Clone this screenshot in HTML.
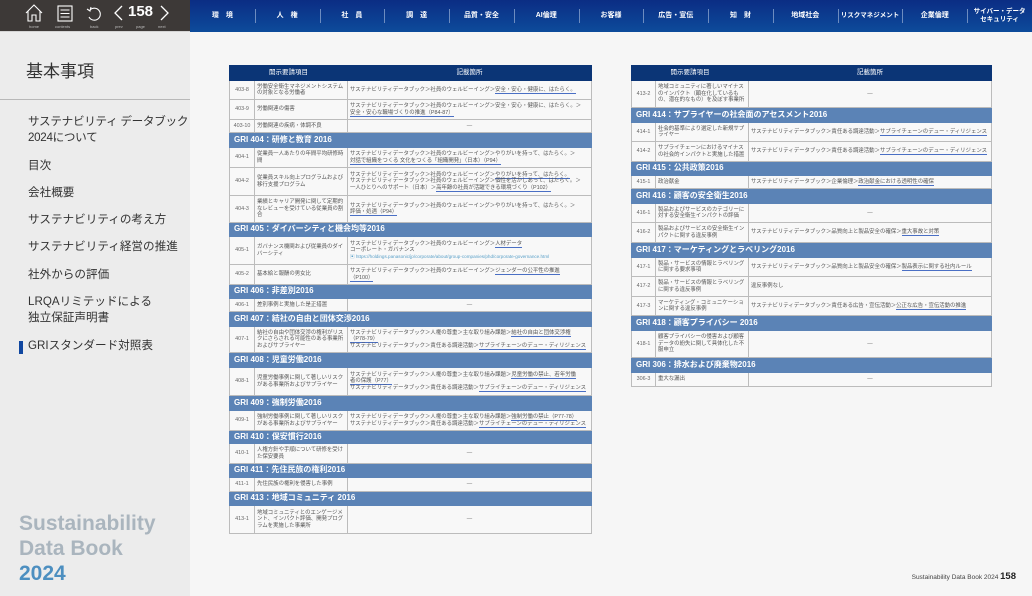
<!DOCTYPE html>
<html><head><meta charset="utf-8"><style>
*{margin:0;padding:0;box-sizing:border-box}
body{width:1032px;height:596px;overflow:hidden;background:#f6f6f6;font-family:"Liberation Sans","Noto Sans CJK JP",sans-serif;position:relative;color:#444}
#tl{position:absolute;left:0;top:0;width:190px;height:31px;background:#3d3937}
#side{position:absolute;left:0;top:31px;width:190px;height:565px;background:#ececec;border-top:1px solid #d4d4d4}
#nav{position:absolute;left:190px;top:0;width:842px;height:32px;background:linear-gradient(#0b2d84,#0d4b9b);display:flex}
#nav div{width:64.77px;height:32px;display:flex;align-items:center;justify-content:center;color:#fff;font-size:7px;font-weight:bold;text-align:center;line-height:8px;position:relative}
#nav div+div:before{content:"";position:absolute;left:0;top:9px;height:14px;border-left:1px solid #6d8cc0}
.lbl{position:absolute;top:24px;font-size:4px;color:#bbb}
.menu{position:absolute;left:28px;font-size:11.6px;color:#333;line-height:16px;white-space:nowrap}
table{position:absolute;border-collapse:collapse;table-layout:fixed;font-size:5.4px;line-height:6.4px;color:#555}
td,th{border:1px solid #bcbcbc;background:#f8f8f8;padding:0 2px;vertical-align:middle;overflow:hidden}
th{background:#0b3576;color:#fff;font-weight:normal;font-size:6.5px;text-align:center;border-color:#0b3576}
td.c{text-align:center;color:#666}
tr.g td{background:#5b83b6;color:#fff;font-weight:bold;font-size:8px;padding-left:4px;border-color:#5b83b6}
u{text-decoration:none;border-bottom:1px solid #4a6fc4}
.book{position:absolute;left:19px;font-size:21px;font-weight:bold;line-height:24px;color:#aab5be}
</style></head><body>
<div id="tl">
<svg width="190" height="31" style="position:absolute;left:0;top:0" fill="none" stroke="#fff" stroke-width="1.1">
<path d="M26 13 L34 5 L42 13 M28 11 V21 H32 V15 H36 V21 H40 V11"/>
<rect x="58" y="6" width="14" height="15"/><path d="M60.5 10 H69.5 M60.5 13.5 H69.5 M60.5 17 H69.5"/>
<path d="M90 10 A6 6 0 1 1 89 17 M87 9 L90 11 L91 7"/>
<path d="M122 6 L115 13 L122 20" stroke-width="1.3"/><path d="M161 6 L168 13 L161 20" stroke-width="1.3"/>
</svg>
<div style="position:absolute;left:128px;top:3px;color:#fff;font-size:15px;font-weight:bold">158</div>
<span class="lbl" style="left:29px">home</span><span class="lbl" style="left:55px">contents</span><span class="lbl" style="left:90px">back</span><span class="lbl" style="left:115px">prev</span><span class="lbl" style="left:136px">page</span><span class="lbl" style="left:158px">next</span>
</div>
<div id="nav"><div>環　境</div><div>人　権</div><div>社　員</div><div>調　達</div><div>品質・安全</div><div>AI倫理</div><div>お客様</div><div>広告・宣伝</div><div>知　財</div><div>地域社会</div><div style="font-size:6.5px">リスクマネジメント</div><div>企業倫理</div><div style="font-size:6.5px">サイバー・データ<br>セキュリティ</div></div>
<div id="side">
<div style="position:absolute;left:26px;top:25px;font-size:17px;color:#333">基本事項</div>
<div style="position:absolute;left:0;top:67px;width:190px;border-top:1px solid #b8b8b8"></div>
<div class="menu" style="top:82px;letter-spacing:-0.3px">サステナビリティ データブック<br>2024について</div>
<div class="menu" style="top:126px">目次</div>
<div class="menu" style="top:153px">会社概要</div>
<div class="menu" style="top:180px">サステナビリティの考え方</div>
<div class="menu" style="top:207px">サステナビリティ経営の推進</div>
<div class="menu" style="top:235px">社外からの評価</div>
<div class="menu" style="top:262px">LRQAリミテッドによる<br>独立保証声明書</div>
<div class="menu" style="top:306px">GRIスタンダード対照表</div>
<div style="position:absolute;left:19px;top:309px;width:4px;height:13px;background:#1047a0"></div>
<div class="book" style="top:480px">Sustainability</div>
<div class="book" style="top:505px">Data Book</div>
<div class="book" style="top:530px;color:#4d8fc0">2024</div>
</div>

<table style="left:229px;top:65px;width:363px">
<colgroup><col style="width:25px"><col style="width:93px"><col></colgroup>
<tr style="height:15px"><th colspan="2">開示要請項目</th><th>記載箇所</th></tr>
<tr style="height:19px"><td class="c">403-8</td><td>労働安全衛生マネジメントシステムの対象となる労働者</td><td>サステナビリティデータブック＞社員のウェルビーイング＞<u>安全・安心・健康に、はたらく。</u></td></tr>
<tr style="height:20px"><td class="c">403-9</td><td>労働関連の傷害</td><td>サステナビリティデータブック＞社員のウェルビーイング＞安全・安心・健康に、はたらく。＞<br><u>安全・安心な職場づくりの推進（P84-87）</u></td></tr>
<tr style="height:13px"><td class="c">403-10</td><td>労働関連の疾病・体調不良</td><td class="c">—</td></tr>
<tr class="g" style="height:15px"><td colspan="3">GRI 404：研修と教育 2016</td></tr>
<tr style="height:20px"><td class="c">404-1</td><td>従業員一人あたりの年間平均研修時間</td><td>サステナビリティデータブック＞社員のウェルビーイング＞やりがいを持って、はたらく。＞<br><u>対話で組織をつくる 文化をつくる「組織開発」（日本）（P94）</u></td></tr>
<tr style="height:28px"><td class="c">404-2</td><td>従業員スキル向上プログラムおよび移行支援プログラム</td><td>サステナビリティデータブック＞社員のウェルビーイング＞<u>やりがいを持って、はたらく。</u><br>サステナビリティデータブック＞社員のウェルビーイング＞個性を活かしあって、はたらく。＞<br>一人ひとりへのサポート（日本）＞<u>高年齢の社員が活躍できる環境づくり（P102）</u></td></tr>
<tr style="height:27px"><td class="c">404-3</td><td>業績とキャリア開発に関して定期的なレビューを受けている従業員の割合</td><td>サステナビリティデータブック＞社員のウェルビーイング＞やりがいを持って、はたらく。＞<br><u>評価・処遇（P94）</u></td></tr>
<tr class="g" style="height:14px"><td colspan="3">GRI 405：ダイバーシティと機会均等2016</td></tr>
<tr style="height:28px"><td class="c">405-1</td><td>ガバナンス機関および従業員のダイバーシティ</td><td>サステナビリティデータブック＞社員のウェルビーイング＞<u>人材データ</u><br>コーポレート・ガバナンス<br><span style="color:#5aa0c8;font-size:4.6px">▣ https://holdings.panasonic/jp/corporate/about/group-companies/phd/corporate-governance.html</span></td></tr>
<tr style="height:20px"><td class="c">405-2</td><td>基本給と報酬の男女比</td><td>サステナビリティデータブック＞社員のウェルビーイング＞<u>ジェンダーの公平性の推進</u><br><u>（P100）</u></td></tr>
<tr class="g" style="height:14px"><td colspan="3">GRI 406：非差別2016</td></tr>
<tr style="height:13px"><td class="c">406-1</td><td>差別事例と実施した是正措置</td><td class="c">—</td></tr>
<tr class="g" style="height:15px"><td colspan="3">GRI 407：結社の自由と団体交渉2016</td></tr>
<tr style="height:26px"><td class="c">407-1</td><td>結社の自由や団体交渉の権利がリスクにさらされる可能性のある事業所およびサプライヤー</td><td>サステナビリティデータブック＞人権の尊重＞主な取り組み課題＞<u>結社の自由と団体交渉権</u><br><u>（P78-79）</u><br>サステナビリティデータブック＞責任ある調達活動＞<u>サプライチェーンのデュー・ディリジェンス</u></td></tr>
<tr class="g" style="height:15px"><td colspan="3">GRI 408：児童労働2016</td></tr>
<tr style="height:28px"><td class="c">408-1</td><td>児童労働事例に関して著しいリスクがある事業所およびサプライヤー</td><td>サステナビリティデータブック＞人権の尊重＞主な取り組み課題＞<u>児童労働の禁止、若年労働</u><br><u>者の保護（P77）</u><br>サステナビリティデータブック＞責任ある調達活動＞<u>サプライチェーンのデュー・ディリジェンス</u></td></tr>
<tr class="g" style="height:15px"><td colspan="3">GRI 409：強制労働2016</td></tr>
<tr style="height:20px"><td class="c">409-1</td><td>強制労働事例に関して著しいリスクがある事業所およびサプライヤー</td><td>サステナビリティデータブック＞人権の尊重＞主な取り組み課題＞<u>強制労働の禁止（P77-78）</u><br>サステナビリティデータブック＞責任ある調達活動＞<u>サプライチェーンのデュー・ディリジェンス</u></td></tr>
<tr class="g" style="height:13px"><td colspan="3">GRI 410：保安慣行2016</td></tr>
<tr style="height:20px"><td class="c">410-1</td><td>人権方針や手順について研修を受けた保安要員</td><td class="c">—</td></tr>
<tr class="g" style="height:14px"><td colspan="3">GRI 411：先住民族の権利2016</td></tr>
<tr style="height:14px"><td class="c">411-1</td><td>先住民族の権利を侵害した事例</td><td class="c">—</td></tr>
<tr class="g" style="height:14px"><td colspan="3">GRI 413：地域コミュニティ 2016</td></tr>
<tr style="height:28px"><td class="c">413-1</td><td>地域コミュニティとのエンゲージメント、インパクト評価、開発プログラムを実施した事業所</td><td class="c">—</td></tr>
</table>

<table style="left:631px;top:65px;width:361px">
<colgroup><col style="width:24px"><col style="width:93px"><col></colgroup>
<tr style="height:15px"><th colspan="2">開示要請項目</th><th>記載箇所</th></tr>
<tr style="height:27px"><td class="c">413-2</td><td>地域コミュニティに著しいマイナスのインパクト（顕在化しているもの、潜在的なもの）を及ぼす事業所</td><td class="c">—</td></tr>
<tr class="g" style="height:15px"><td colspan="3">GRI 414：サプライヤーの社会面のアセスメント2016</td></tr>
<tr style="height:19px"><td class="c">414-1</td><td>社会的基準により選定した新規サプライヤー</td><td style="white-space:nowrap">サステナビリティデータブック＞責任ある調達活動＞<u>サプライチェーンのデュー・ディリジェンス</u></td></tr>
<tr style="height:20px"><td class="c">414-2</td><td>サプライチェーンにおけるマイナスの社会的インパクトと実施した措置</td><td style="white-space:nowrap">サステナビリティデータブック＞責任ある調達活動＞<u>サプライチェーンのデュー・ディリジェンス</u></td></tr>
<tr class="g" style="height:14px"><td colspan="3">GRI 415：公共政策2016</td></tr>
<tr style="height:13px"><td class="c">415-1</td><td>政治献金</td><td>サステナビリティデータブック＞企業倫理＞<u>政治献金における透明性の確保</u></td></tr>
<tr class="g" style="height:15px"><td colspan="3">GRI 416：顧客の安全衛生2016</td></tr>
<tr style="height:19px"><td class="c">416-1</td><td>製品およびサービスのカテゴリーに対する安全衛生インパクトの評価</td><td class="c">—</td></tr>
<tr style="height:20px"><td class="c">416-2</td><td>製品およびサービスの安全衛生インパクトに関する違反事例</td><td>サステナビリティデータブック＞品質向上と製品安全の確保＞<u>重大事故と対策</u></td></tr>
<tr class="g" style="height:15px"><td colspan="3">GRI 417：マーケティングとラベリング2016</td></tr>
<tr style="height:19px"><td class="c">417-1</td><td>製品・サービスの情報とラベリングに関する要求事項</td><td>サステナビリティデータブック＞品質向上と製品安全の確保＞<u>製品表示に関する社内ルール</u></td></tr>
<tr style="height:20px"><td class="c">417-2</td><td>製品・サービスの情報とラベリングに関する違反事例</td><td>違反事例なし</td></tr>
<tr style="height:19px"><td class="c">417-3</td><td>マーケティング・コミュニケーションに関する違反事例</td><td>サステナビリティデータブック＞責任ある広告・宣伝活動＞<u>公正な広告・宣伝活動の推進</u></td></tr>
<tr class="g" style="height:15px"><td colspan="3">GRI 418：顧客プライバシー 2016</td></tr>
<tr style="height:27px"><td class="c">418-1</td><td>顧客プライバシーの侵害および顧客データの紛失に関して具体化した不服申立</td><td class="c">—</td></tr>
<tr class="g" style="height:15px"><td colspan="3">GRI 306：排水および廃棄物2016</td></tr>
<tr style="height:14px"><td class="c">306-3</td><td>重大な漏出</td><td class="c">—</td></tr>
</table>

<div style="position:absolute;right:16px;top:571px;font-size:6.5px;color:#444;white-space:nowrap">Sustainability Data Book 2024 <b style="font-size:9.5px;color:#222">158</b></div>
</body></html>
